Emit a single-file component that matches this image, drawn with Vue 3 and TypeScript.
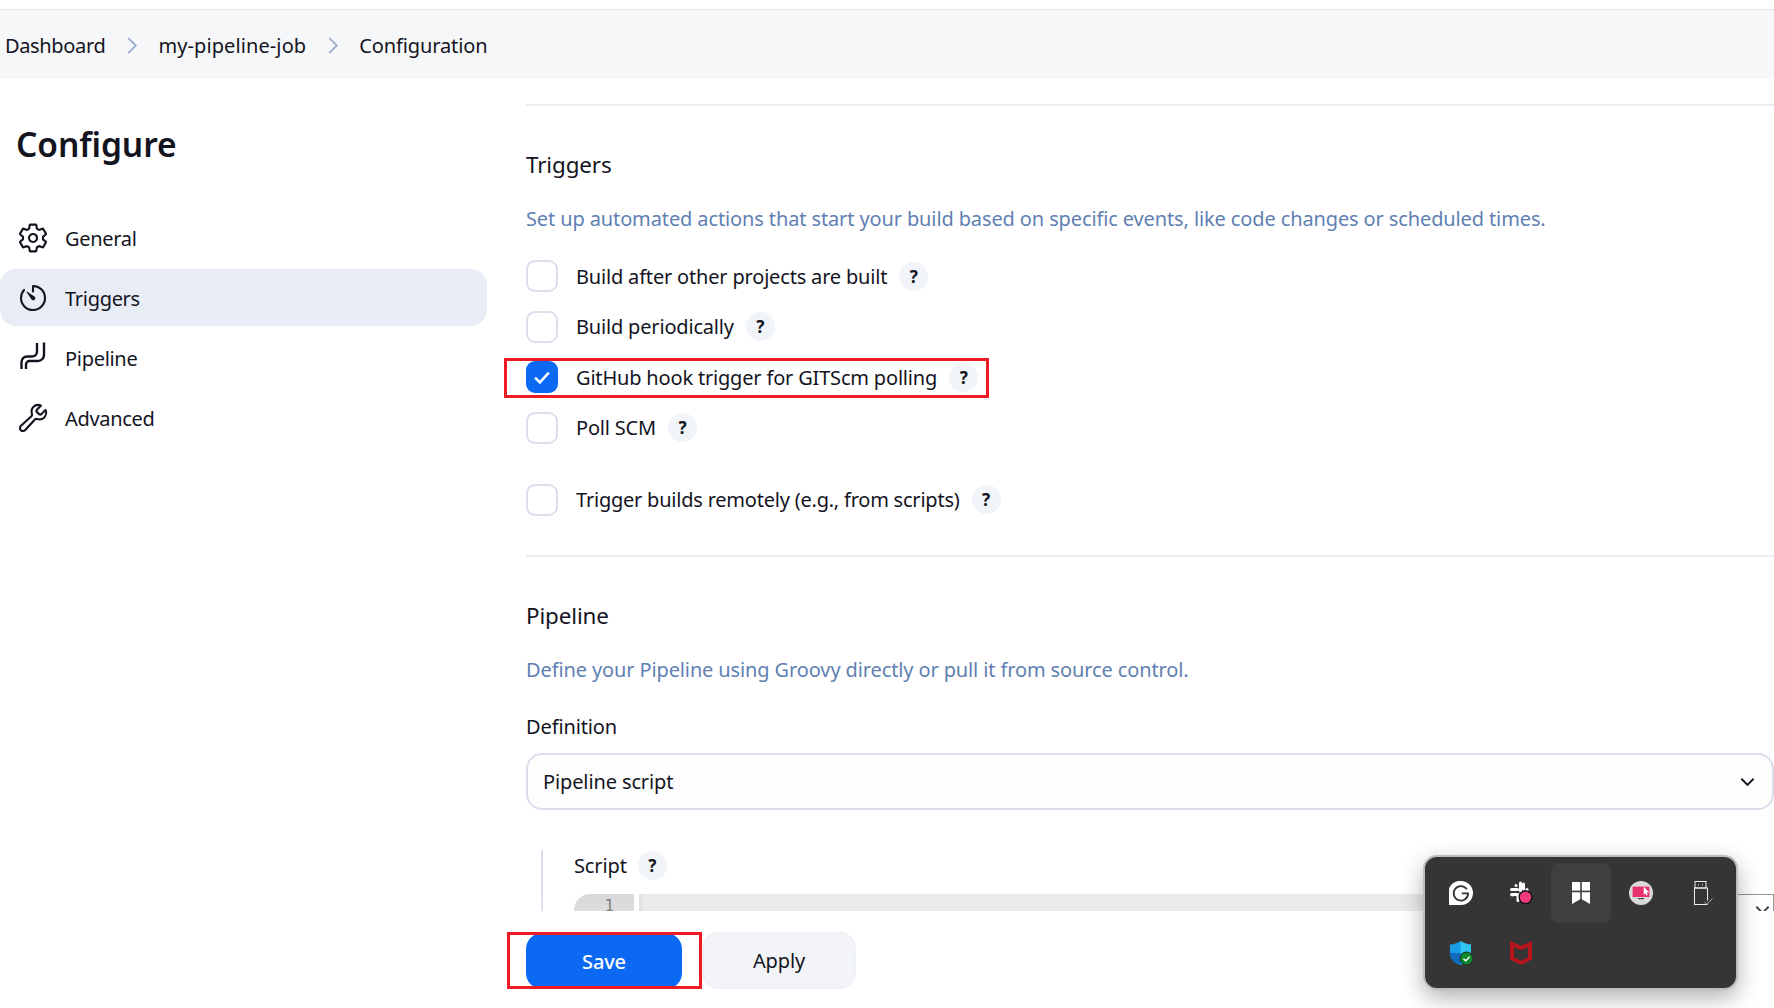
<script setup lang="ts">
const navItems = [
  { label: "General", icon: "gear" },
  { label: "Triggers", icon: "timer", active: true },
  { label: "Pipeline", icon: "pipeline" },
  { label: "Advanced", icon: "wrench" }
];

const triggers = [
  { label: "Build after other projects are built" },
  { label: "Build periodically" },
  { label: "GitHub hook trigger for GITScm polling", checked: true },
  { label: "Poll SCM" }
];
</script>

<template>
  <div class="page">
    <header class="crumbs">
      <span class="crumb-root">Dashboard</span>
      <svg class="sep" viewBox="0 0 12 20"><path d="M2 2l8 8-8 8" /></svg>
      <span class="crumb-job">my-pipeline-job</span>
      <svg class="sep" viewBox="0 0 12 20"><path d="M2 2l8 8-8 8" /></svg>
      <span>Configuration</span>
    </header>

    <div class="body">
      <aside class="side">
        <h1>Configure</h1>
        <nav class="nav">
          <a v-for="item in navItems" :key="item.label" class="nav-item" :class="{ active: item.active }">
            <svg v-if="item.icon === 'gear'" class="nav-icon" viewBox="0 0 512 512">
              <path
                class="line"
                d="M262.29 192.31a64 64 0 1057.4 57.4 64.13 64.13 0 00-57.4-57.4zM416.39 256a154.34 154.34 0 01-1.53 20.79l45.21 35.46a10.81 10.81 0 012.45 13.75l-42.77 74a10.81 10.81 0 01-13.14 4.59l-44.9-18.08a16.11 16.11 0 00-15.17 1.75A164.48 164.48 0 01325 400.8a15.94 15.94 0 00-8.82 12.14l-6.73 47.89a11.08 11.08 0 01-10.68 9.17h-85.54a11.11 11.11 0 01-10.69-8.87l-6.72-47.82a16.07 16.07 0 00-9-12.22 155.3 155.3 0 01-21.46-12.57 16 16 0 00-15.11-1.71l-44.89 18.07a10.81 10.81 0 01-13.14-4.58l-42.77-74a10.8 10.8 0 012.45-13.75l38.21-30a16.05 16.05 0 006-14.08c-.36-4.17-.58-8.33-.58-12.5s.21-8.27.58-12.35a16 16 0 00-6.07-13.94l-38.19-30A10.81 10.81 0 0149.48 186l42.77-74a10.81 10.81 0 0113.14-4.59l44.9 18.08a16.11 16.11 0 0015.17-1.75A164.48 164.48 0 01187 111.2a15.94 15.94 0 008.82-12.14l6.73-47.89A11.08 11.08 0 01213.23 42h85.54a11.11 11.11 0 0110.69 8.87l6.72 47.82a16.07 16.07 0 009 12.22 155.3 155.3 0 0121.46 12.57 16 16 0 0015.11 1.71l44.89-18.07a10.81 10.81 0 0113.14 4.58l42.77 74a10.8 10.8 0 01-2.45 13.75l-38.21 30a16.05 16.05 0 00-6.05 14.08c.33 4.14.55 8.3.55 12.47z"
              />
            </svg>
            <svg v-else-if="item.icon === 'timer'" class="nav-icon" viewBox="0 0 512 512">
              <path
                class="line"
                d="M112.91 128A191.85 191.85 0 0064 254c-1.18 106.35 85.65 193.8 192 194 106.2.2 192-85.83 192-192 0-104.54-83.55-189.61-187.5-192a4.36 4.36 0 00-4.5 4.37V152"
              />
              <path
                class="solid"
                d="M233.38 278.63l-79-113a8.13 8.13 0 0111.32-11.32l113 79a32.5 32.5 0 01-37.25 53.26 33.21 33.21 0 01-8.07-7.94z"
              />
            </svg>
            <svg v-else-if="item.icon === 'pipeline'" class="nav-icon" viewBox="0 0 32 32">
              <path class="line thick" d="M4.500 27V20a5.500 5.500 0 0 1 5.500-5.500h5a5 5 0 0 0 5-5V1" />
              <path class="line thick" d="M9 27v-4.500a3.500 3.500 0 0 1 3.500-3.500H21a6 6 0 0 0 6-6V0.500" />
            </svg>
            <svg v-else class="nav-icon" viewBox="0 0 512 512">
              <path
                class="line"
                d="M393.87 190a32.1 32.1 0 01-45.25 0l-26.57-26.57a32.09 32.09 0 010-45.26L382.19 58a1 1 0 00-.3-1.64c-38.82-16.64-89.15-8.16-121.09 23.57-30.57 30.35-32.32 76-21.12 115.84a31.93 31.93 0 01-9.06 32.08L64 380a48.17 48.17 0 1068 68l153.86-167a31.93 31.93 0 0131.6-9.13c39.54 10.59 84.54 8.6 115.13-21.59 32.93-32.5 40.56-88.52 23.75-122a1 1 0 00-1.6-.26z"
              />
            </svg>
            <span class="nav-label">{{ item.label }}</span>
          </a>
        </nav>
      </aside>

      <main class="main">
        <section class="section">
          <h2>Triggers</h2>
          <p class="desc">Set up automated actions that start your build based on specific events, like code changes or scheduled times.</p>
          <div class="checks">
            <div v-for="t in triggers" :key="t.label" class="check-row">
              <span class="box" :class="{ on: t.checked }">
                <svg v-if="t.checked" viewBox="0 0 16 16"><path d="M3 8.500l3.400 3.400L13 4.800" /></svg>
              </span>
              <span class="check-label">{{ t.label }}</span>
              <span class="help">?</span>
            </div>
            <div class="check-row remote">
              <span class="box"></span>
              <span class="check-label">Trigger builds remotely (e.g., from scripts)</span>
              <span class="help">?</span>
            </div>
          </div>
        </section>

        <section class="section pipeline">
          <h2>Pipeline</h2>
          <p class="desc">Define your Pipeline using Groovy directly or pull it from source control.</p>
          <label class="field-label">Definition</label>
          <div class="select">
            <span>Pipeline script</span>
            <svg viewBox="0 0 16 10"><path d="M1.500 1.500L8 8l6.500-6.500" /></svg>
          </div>
          <div class="script">
            <div class="script-head">
              <span>Script</span>
              <span class="help">?</span>
            </div>
            <div class="editor">
              <div class="gutter">1</div>
              <div class="gutter-edge"></div>
              <div class="code"></div>
              <div class="try">
                <svg viewBox="0 0 16 10"><path d="M1.500 1.500L8 8l6.500-6.500" /></svg>
              </div>
            </div>
          </div>
        </section>
      </main>
    </div>

    <footer class="bottom">
      <button type="button" class="btn save">Save</button>
      <button type="button" class="btn apply">Apply</button>
    </footer>

    <div class="mark mark-hook"></div>
    <div class="mark mark-save"></div>

    <div class="tray">
      <div class="tray-cell">
        <!-- grammarly -->
        <svg viewBox="0 0 24 24">
          <path fill="#fff" d="M12 0a12 12 0 0 1 0 24H0v-7.500A12 12 0 0 1 12 0z" />
          <path fill="none" stroke="#353535" stroke-width="1.800" d="M17.800 8.200a7.200 7.200 0 1 0 1.300 4.200h-6.300" />
        </svg>
      </div>
      <div class="tray-cell">
        <!-- slack with dot -->
        <svg viewBox="0 0 24 24">
          <g fill="none" stroke="#fff" stroke-width="3" stroke-linecap="round">
            <path d="M2.500 8.500h6" />
            <path d="M7 4.500h0" />
            <path d="M11.500 2v8" />
            <path d="M18 8.500h0" />
            <path d="M3.500 14h0" />
            <path d="M9 13.500v6" />
            <path d="M2.500 13.500h5" />
            <path d="M14.500 3v5" />
          </g>
          <circle cx="16.500" cy="16.300" r="7" fill="#111" />
          <circle cx="16.500" cy="16.300" r="5.700" fill="#f0397c" />
        </svg>
      </div>
      <div class="tray-cell hover">
        <!-- bookmark tiles -->
        <svg viewBox="0 0 24 24" fill="#fff">
          <rect x="3" y="1" width="8.200" height="8.600" />
          <rect x="12.800" y="1" width="8.200" height="8.600" />
          <path d="M3 11.200h8.200v7L3 23z" />
          <path d="M12.800 11.200H21V23l-8.200-4.800z" />
        </svg>
      </div>
      <div class="tray-cell">
        <!-- screen share -->
        <svg viewBox="0 0 24 24">
          <circle cx="12" cy="12" r="12" fill="#d9d9d9" />
          <rect x="3.600" y="5.600" width="16.800" height="10.400" fill="#e9326d" />
          <rect x="9" y="17" width="6" height="1.200" fill="#444" />
          <path d="M14.800 5.800l5.400 5.600-2.600.2 1 2.400-1.400.6-1-2.400-1.600 1.600z" fill="#fff" />
        </svg>
      </div>
      <div class="tray-cell">
        <!-- usb -->
        <svg viewBox="0 0 24 24" fill="none" stroke="#fff" stroke-width="0.900">
          <rect x="6" y="0.500" width="11" height="6.500" />
          <rect x="5.500" y="7" width="13" height="16.500" />
          <path d="M9 3.700h1M13 3.700h1" />
          <path d="M15.500 21l2.400 2.400 5.600-6" stroke="#bbb" fill="#353535" />
        </svg>
      </div>
      <div class="tray-cell">
        <!-- defender shield -->
        <svg viewBox="0 0 24 24">
          <path d="M1 3.500C5 3.500 8 2 11.500 0 15 2 18 3.500 22 3.500V13c0 5-4.500 9-10.500 11C5.500 22 1 18 1 13z" fill="#1a9be6" />
          <path d="M11.500 0C15 2 18 3.500 22 3.500V12H11.500z" fill="#2fc4f2" />
          <path d="M1 12h10.500v12C5.500 22 1 18 1 13z" fill="#0f6cbd" />
          <circle cx="17.500" cy="17.500" r="6.500" fill="#0e8a2e" stroke="#222" stroke-width="1" />
          <path d="M14.500 17.700l2.200 2.100 4-4" fill="none" stroke="#fff" stroke-width="1.400" />
        </svg>
      </div>
      <div class="tray-cell">
        <!-- mcafee -->
        <svg viewBox="0 0 24 24">
          <path fill="#b5161b" d="M1 0l11 4.800L23 0v18.500L12 24 1 18.500zM5 6.200v10l7 3.500 7-3.500v-10l-7 3z" />
        </svg>
      </div>
    </div>
  </div>
</template>

<style scoped>
.page {
  position: relative;
  width: 1774px;
  height: 1008px;
  overflow: hidden;
  background: #fff;
  color: #14141f;
  font-family: "Noto Sans", "Open Sans", sans-serif;
  font-size: 20px;
  letter-spacing: -0.12px;
}

.crumbs {
  display: flex;
  align-items: center;
  box-sizing: border-box;
  height: 70px;
  margin-top: 9px;
  padding: 2px 0 0 5px;
  border-top: 1px solid #e4e5e8;
  background: #f6f7f9;
}
.crumb-root {
  letter-spacing: -0.35px;
}
.crumb-job {
  letter-spacing: 0.1px;
}
.sep {
  width: 12px;
  height: 19px;
  margin: 0 20.500px;
}
.sep path {
  fill: none;
  stroke: #9fb0cf;
  stroke-width: 2;
}

.body {
  display: flex;
}
.side {
  flex: none;
  width: 487px;
}
.side h1 {
  margin: 40px 0 0 16px;
  font-size: 33.600px;
  font-weight: 600;
  line-height: 50px;
}
.nav {
  display: flex;
  flex-direction: column;
  gap: 3px;
  margin-top: 40px;
}
.nav-item {
  display: flex;
  align-items: center;
  gap: 16px;
  height: 57px;
  padding-left: 17px;
  border-radius: 16px;
}
.nav-item.active {
  background: #e8ecf4;
}
.nav-label {
  padding-top: 2px;
  letter-spacing: -0.3px;
}
.nav-icon {
  width: 32px;
  height: 32px;
  flex: none;
}
.line {
  fill: none;
  stroke: #14141f;
  stroke-width: 34;
  stroke-linecap: round;
  stroke-linejoin: round;
}
.line.thick {
  stroke-width: 2.400;
  stroke-linecap: butt;
}
.solid {
  fill: #14141f;
}

.main {
  flex: 1;
  min-width: 0;
  margin-left: 39px;
  padding-top: 25px;
}
.section {
  border-top: 2px solid #e9ecf3;
  padding-top: 41px;
}
.section h2 {
  margin: 0;
  font-size: 22.400px;
  font-weight: 400;
  line-height: 36px;
}
.desc {
  margin: 19px 0 0;
  color: #5f7fb3;
  font-size: 20px;
  line-height: 34px;
}
.checks {
  margin-top: 24px;
  display: flex;
  flex-direction: column;
}
.check-row {
  display: flex;
  align-items: center;
  height: 32px;
  margin-bottom: 18.670px;
}
.check-row.remote {
  margin-top: 21px;
  margin-bottom: 0;
}
.box {
  flex: none;
  display: flex;
  align-items: center;
  justify-content: center;
  box-sizing: border-box;
  width: 32px;
  height: 32px;
  border: 2px solid #dadfec;
  border-radius: 9px;
  background: #fff;
}
.box.on {
  border: none;
  background: #0b69f4;
}
.box svg {
  width: 22px;
  height: 22px;
}
.box path {
  fill: none;
  stroke: #fff;
  stroke-width: 1.800;
}
.check-label {
  margin-left: 18px;
  letter-spacing: -0.18px;
}
.remote .check-label {
  letter-spacing: -0.22px;
}
.help {
  flex: none;
  display: flex;
  align-items: center;
  justify-content: center;
  width: 29px;
  height: 29px;
  margin-left: 12px;
  border-radius: 50%;
  background: #f1f4f8;
  font-size: 17px;
  font-weight: 700;
}

.pipeline {
  margin-top: 39px;
}
.field-label {
  display: block;
  margin-top: 23px;
  line-height: 34px;
}
.select {
  display: flex;
  align-items: center;
  justify-content: space-between;
  box-sizing: border-box;
  height: 57px;
  margin-top: 9px;
  padding: 1px 17px 0 15px;
  border: 2px solid #d9deeb;
  border-radius: 16px;
  background: #fdfdfd;
}
.select svg,
.try svg {
  display: block;
  width: 15px;
  height: 10px;
}
.select path,
.try path {
  fill: none;
  stroke: #14141f;
  stroke-width: 2;
}
.script {
  margin: 40px 0 0 15px;
  padding-left: 31px;
  border-left: 2px solid #d9deeb;
}
.script-head {
  display: flex;
  align-items: center;
  height: 32px;
}
.script-head .help {
  margin-left: 11px;
}
.editor {
  display: flex;
  height: 40px;
  margin-top: 12px;
  background: #fff;
}
.gutter {
  flex: none;
  width: 60px;
  padding-right: 20px;
  box-sizing: border-box;
  border-radius: 16px 0 0 0;
  background: #d5d5d8;
  color: #666;
  font-family: "DejaVu Sans Mono", monospace;
  font-size: 16px;
  text-align: right;
  line-height: 24px;
}
.gutter-edge {
  width: 3px;
  margin-left: 5px;
  background: #dcdcde;
}
.code {
  flex: 1;
  background: #e7e7ea;
}
.try {
  flex: none;
  width: 37px;
  box-sizing: border-box;
  padding: 10px 0 0 17px;
  border: 1px solid #8a8a8a;
  border-bottom: none;
  background: #fff;
}

.bottom {
  position: absolute;
  left: 487px;
  right: 0;
  bottom: 0;
  display: flex;
  align-items: flex-start;
  gap: 20px;
  height: 97px;
  padding: 21px 0 0 39px;
  box-sizing: border-box;
  background: #fff;
}
.bottom::before {
  content: "";
  position: absolute;
  left: 0;
  right: 0;
  top: -30px;
  height: 30px;
  background: linear-gradient(rgba(255, 255, 255, 0), rgba(255, 255, 255, 0.2));
}
.btn {
  border-radius: 16px;
  font-family: inherit;
  font-size: 20px;
  letter-spacing: inherit;
}
.save {
  width: 156px;
  height: 56px;
  margin-top: 1px;
  border: none;
  background: #0b69f4;
  color: #fff;
  font-weight: 500;
}
.apply {
  width: 154px;
  height: 57px;
  border: 2px solid #eef1f6;
  background: #f2f4f8;
  color: #14141f;
}

.mark {
  position: absolute;
  box-sizing: border-box;
  border: 3px solid #ed1c24;
}
.mark-hook {
  left: 504px;
  top: 358px;
  width: 485px;
  height: 40px;
}
.mark-save {
  left: 507px;
  top: 932px;
  width: 195px;
  height: 57px;
}

.tray {
  position: absolute;
  left: 1423px;
  top: 855px;
  box-sizing: border-box;
  display: grid;
  grid-template-columns: repeat(5, 60px);
  grid-auto-rows: 60px;
  width: 315px;
  height: 135px;
  padding: 6px;
  border: 2px solid #bdbdbd;
  border-radius: 14px;
  background: #353535;
  box-shadow: 0 8px 22px rgba(0, 0, 0, 0.3);
}
.tray-cell {
  display: flex;
  align-items: center;
  justify-content: center;
  border-radius: 8px;
}
.tray-cell.hover {
  background: #3f3f3f;
}
.tray-cell svg {
  width: 24px;
  height: 24px;
}
</style>
